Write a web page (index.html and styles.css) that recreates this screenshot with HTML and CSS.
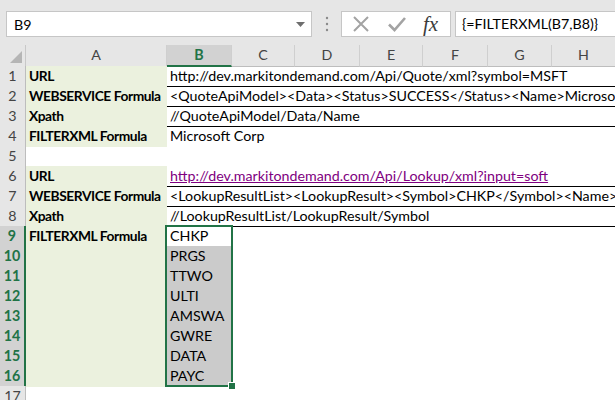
FILE: index.html
```html
<!DOCTYPE html>
<html>
<head>
<meta charset="utf-8">
<link rel="stylesheet" href="styles.css">
</head>
<body>
<div class="app">
  <div class="toolbar">
    <div class="namebox">
      <span>B9</span>
      <svg class="dd" width="9" height="5" viewBox="0 0 9 5"><polygon points="0,0 9,0 4.5,5" fill="#6e6e6e"/></svg>
    </div>
    <div class="grip">
      <svg width="4" height="16" viewBox="0 0 4 16"><circle cx="2" cy="2" r="1.2" fill="#8a8a8a"/><circle cx="2" cy="8" r="1.2" fill="#8a8a8a"/><circle cx="2" cy="14" r="1.2" fill="#8a8a8a"/></svg>
    </div>
    <div class="btns">
      <svg class="ic" width="18" height="18" viewBox="0 0 18 18"><path d="M2 2 L16 16 M16 2 L2 16" stroke="#a3a3a3" stroke-width="2" fill="none"/></svg>
      <svg class="ic" width="20" height="18" viewBox="0 0 20 18"><path d="M2 9.5 L7.5 15 L18 3" stroke="#a3a3a3" stroke-width="2.6" fill="none"/></svg>
      <span class="fx">fx</span>
    </div>
    <div class="formula">{=FILTERXML(B7,B8)}</div>
  </div>

  <div class="sheet">
    <div class="hdr">
      <div class="corner"><svg width="12" height="12" viewBox="0 0 12 12"><polygon points="12,0 12,12 0,12" fill="#b5b5b5"/></svg></div>
      <div class="ch">A</div>
      <div class="ch csel">B</div>
      <div class="ch">C</div>
      <div class="ch">D</div>
      <div class="ch">E</div>
      <div class="ch">F</div>
      <div class="ch">G</div>
      <div class="ch">H</div>
    </div>

    <div class="row"><div class="rh">1</div><div class="c a bb b">URL</div><div class="c bb">http://dev.markitondemand.com/Api/Quote/xml?symbol=MSFT</div><div class="rest bb"></div></div>
    <div class="row"><div class="rh">2</div><div class="c a bb b">WEBSERVICE Formula</div><div class="c bb">&lt;QuoteApiModel&gt;&lt;Data&gt;&lt;Status&gt;SUCCESS&lt;/Status&gt;&lt;Name&gt;Microsoft Corp&lt;/Name&gt;&lt;Symbol&gt;MSFT&lt;/Symbol&gt;</div><div class="rest bb"></div></div>
    <div class="row"><div class="rh">3</div><div class="c a bb b">Xpath</div><div class="c bb">//QuoteApiModel/Data/Name</div><div class="rest bb"></div></div>
    <div class="row"><div class="rh">4</div><div class="c a b">FILTERXML Formula</div><div class="c">Microsoft Corp</div><div class="rest"></div></div>
    <div class="row"><div class="rh">5</div><div class="c"></div><div class="c"></div><div class="rest"></div></div>
    <div class="row"><div class="rh">6</div><div class="c a bb b">URL</div><div class="c bb"><span class="link">http://dev.markitondemand.com/Api/Lookup/xml?input=soft</span></div><div class="rest bb"></div></div>
    <div class="row"><div class="rh">7</div><div class="c a bb b">WEBSERVICE Formula</div><div class="c bb">&lt;LookupResultList&gt;&lt;LookupResult&gt;&lt;Symbol&gt;CHKP&lt;/Symbol&gt;&lt;Name&gt;Check Point Software&lt;/Name&gt;</div><div class="rest bb"></div></div>
    <div class="row"><div class="rh">8</div><div class="c a bb b">Xpath</div><div class="c bb">//LookupResultList/LookupResult/Symbol</div><div class="rest bb"></div></div>
    <div class="row"><div class="rh rsel">9</div><div class="c a b">FILTERXML Formula</div><div class="c">CHKP</div><div class="rest"></div></div>
    <div class="row"><div class="rh rsel">10</div><div class="c a"></div><div class="c gs">PRGS</div><div class="rest"></div></div>
    <div class="row"><div class="rh rsel">11</div><div class="c a"></div><div class="c gs">TTWO</div><div class="rest"></div></div>
    <div class="row"><div class="rh rsel">12</div><div class="c a"></div><div class="c gs">ULTI</div><div class="rest"></div></div>
    <div class="row"><div class="rh rsel">13</div><div class="c a"></div><div class="c gs">AMSWA</div><div class="rest"></div></div>
    <div class="row"><div class="rh rsel">14</div><div class="c a"></div><div class="c gs">GWRE</div><div class="rest"></div></div>
    <div class="row"><div class="rh rsel">15</div><div class="c a"></div><div class="c gs">DATA</div><div class="rest"></div></div>
    <div class="row"><div class="rh rsel">16</div><div class="c a"></div><div class="c gs">PAYC</div><div class="rest"></div></div>
    <div class="row"><div class="rh">17</div><div class="c"></div><div class="c"></div><div class="rest"></div></div>

    <div class="selbox"><div class="handle"></div></div>
  </div>
</div>
</body>
</html>
```

FILE: styles.css
```css
html, body {
  margin: 0;
  padding: 0;
  width: 615px;
  height: 400px;
  overflow: hidden;
  background: #fff;
}
.app {
  font-family: Lato, "Liberation Sans", sans-serif;
  font-size: 14.25px;
  color: #000;
  width: 615px;
  height: 400px;
  overflow: hidden;
}
.toolbar {
  height: 45px;
  box-sizing: border-box;
  background: #e6e6e6;
  display: flex;
  align-items: flex-start;
  padding: 11px 0 0 6px;
}
.namebox {
  width: 306px;
  height: 26px;
  box-sizing: border-box;
  background: #fff;
  border: 1px solid #c6c6c6;
  display: flex;
  align-items: center;
  justify-content: space-between;
  padding: 0 6px 0 7px;
  color: #000;
}
.dd { margin-top: 1px; }
.grip {
  width: 29px;
  height: 26px;
  display: flex;
  align-items: center;
  justify-content: center;
}
.btns {
  width: 110px;
  height: 26px;
  box-sizing: border-box;
  background: #fff;
  border: 1px solid #c6c6c6;
  display: flex;
  align-items: center;
  gap: 17px;
  padding-left: 10px;
}
.fx {
  font-family: "Liberation Serif", serif;
  font-style: italic;
  font-size: 21px;
  color: #3b3b3b;
  line-height: 20px;
  margin-left: -1px;
}
.formula {
  flex: 1;
  height: 26px;
  box-sizing: border-box;
  background: #fff;
  border: 1px solid #c6c6c6;
  border-right: none;
  margin-left: 4px;
  padding-left: 6px;
  line-height: 24px;
  white-space: nowrap;
}
.sheet {
  position: relative;
}
.hdr {
  display: grid;
  grid-template-columns: 26px 141px 65px 63px 65px 63px 65px 64px 64px;
  height: 21px;
  background: #e6e6e6;
}
.corner {
  box-sizing: border-box;
  border-right: 1px solid #c8c8c8;
  border-bottom: 1px solid #bdbdbd;
  display: flex;
  align-items: flex-end;
  justify-content: flex-end;
  padding: 0 3px 3px 0;
}
.ch {
  box-sizing: border-box;
  border-right: 1px solid #cfcfcf;
  border-bottom: 1px solid #bdbdbd;
  text-align: center;
  line-height: 20px;
  color: #444;
}
.csel {
  background: #d2d2d2;
  color: #217346;
  font-weight: bold;
  border-bottom: 2px solid #217346;
}
.row {
  display: grid;
  grid-template-columns: 26px 141px 65px 1fr;
  height: 20px;
}
.rh {
  box-sizing: border-box;
  background: #e6e6e6;
  border-right: 1px solid #bdbdbd;
  border-bottom: 1px solid #d6d6d6;
  text-align: center;
  line-height: 20px;
  color: #444;
}
.rsel {
  background: #d2d2d2;
  color: #217346;
  font-weight: bold;
  border-right: 2px solid #217346;
  border-bottom-color: #c4c4c4;
}
.c {
  box-sizing: border-box;
  padding-left: 3px;
  line-height: 20px;
  white-space: nowrap;
  overflow: visible;
}
.a { background: #ebf1de; overflow: hidden; }
.b { font-weight: bold; font-size: 13.8px; letter-spacing: -0.45px; }
.gs { background: #cbcbcb; }
.bb { border-bottom: 1px solid #000; line-height: 19px; }
.rest { box-sizing: border-box; }
.link {
  color: #800080;
  text-decoration: underline;
}
.selbox {
  position: absolute;
  left: 165px;
  top: 180px;
  width: 68px;
  height: 162px;
  box-sizing: border-box;
  border: 2px solid #217346;
}
.handle {
  position: absolute;
  right: -5px;
  bottom: -5px;
  width: 6px;
  height: 6px;
  background: #217346;
  border: 1px solid #fff;
}
```
